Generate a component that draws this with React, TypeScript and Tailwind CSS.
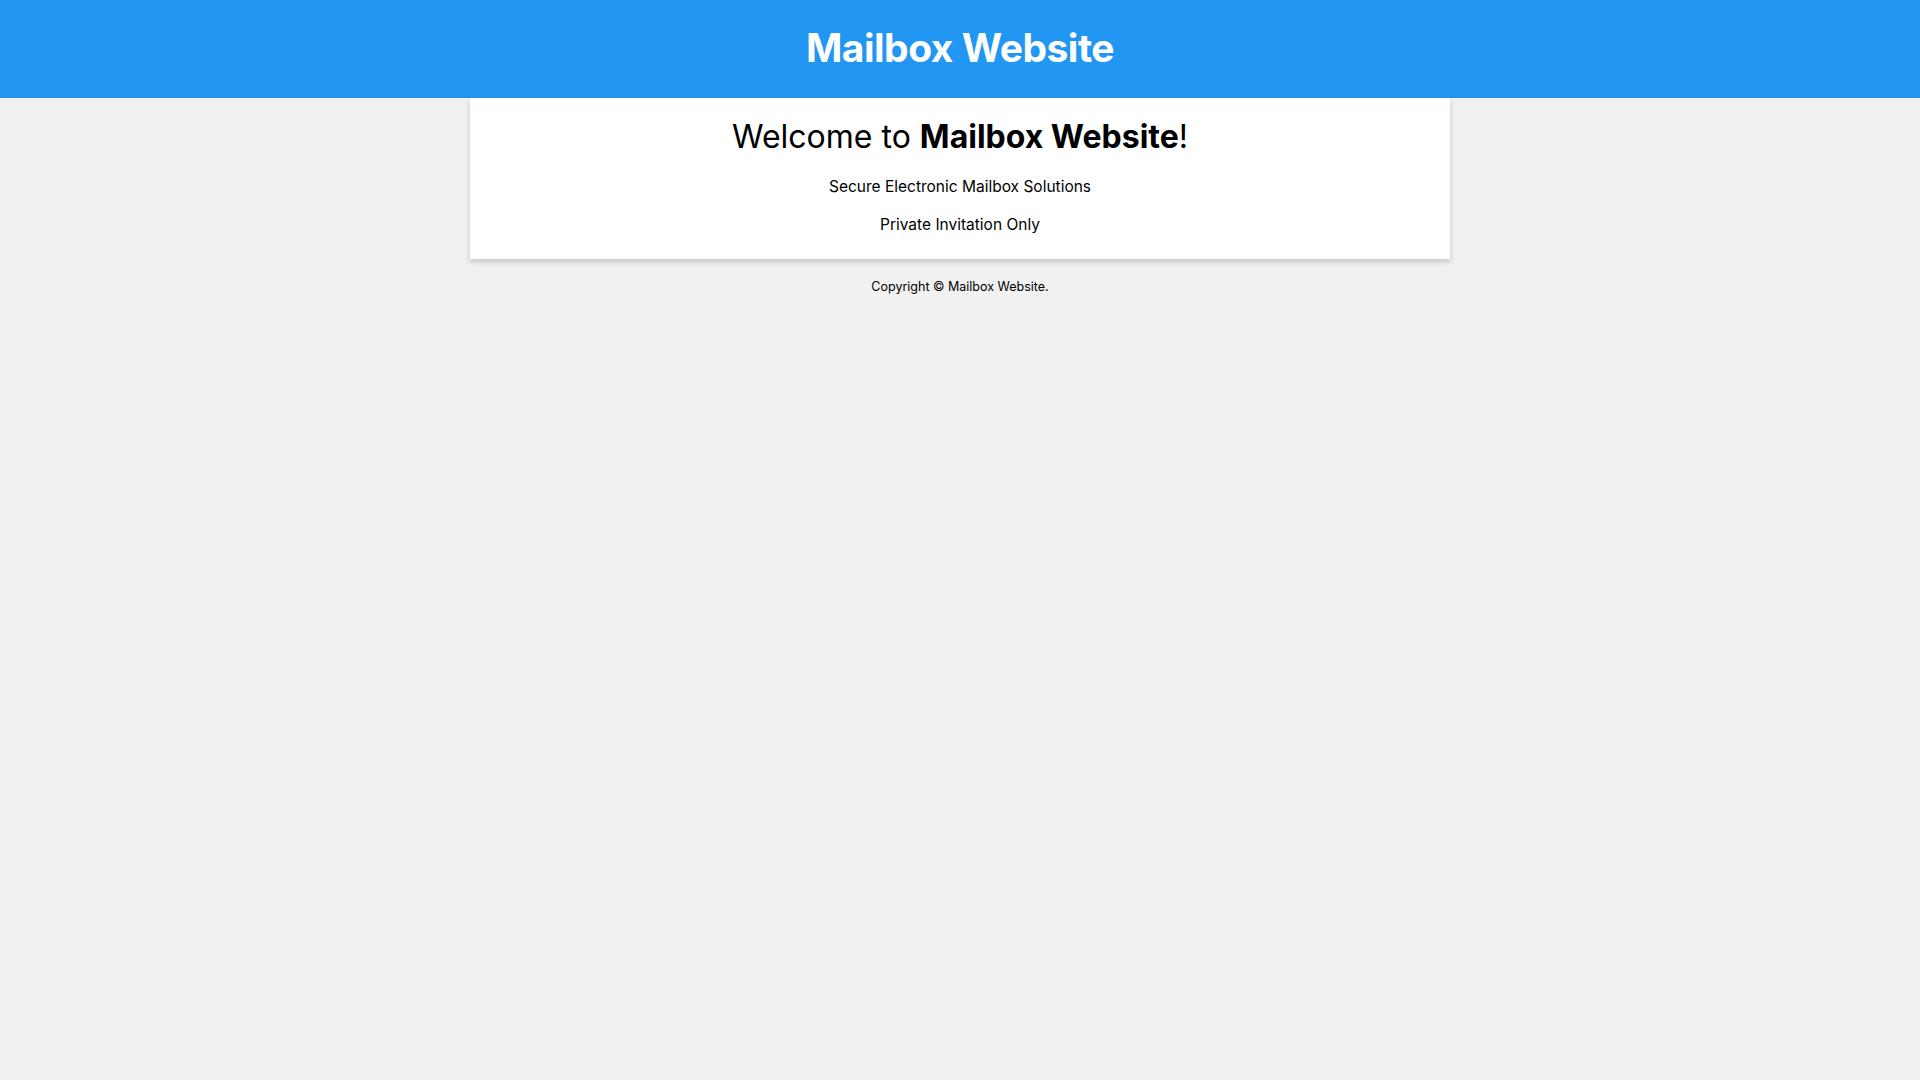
export default function App() {
  return (
    <div className="min-h-screen bg-[#f1f1f1] font-['Inter','Noto_Sans',sans-serif] text-black">
      {/* Header */}
      <header className="flex h-[98px] items-center justify-center bg-[#2196f3] pb-[4px]">
        <h1 className="text-[39px] font-bold leading-none tracking-[-0.5px] text-white">Mailbox Website</h1>
      </header>

      {/* Welcome card */}
      <main className="mx-auto w-[980px] bg-white px-8 pb-[23px] pt-[17px] text-center shadow-[0_3px_6px_rgba(0,0,0,0.18)]">
        <h2 className="text-[32px] leading-[44px] font-normal">
          Welcome to <span className="font-bold">Mailbox Website</span>!
        </h2>
        <p className="mt-[17px] text-[15.5px] leading-[22px]">Secure Electronic Mailbox Solutions</p>
        <p className="mt-[16px] text-[15.5px] leading-[22px]">Private Invitation Only</p>
      </main>

      {/* Footer */}
      <footer className="pt-[19px] text-center text-[12.5px] leading-[18px]">
        Copyright © Mailbox Website.
      </footer>
    </div>
  );
}
